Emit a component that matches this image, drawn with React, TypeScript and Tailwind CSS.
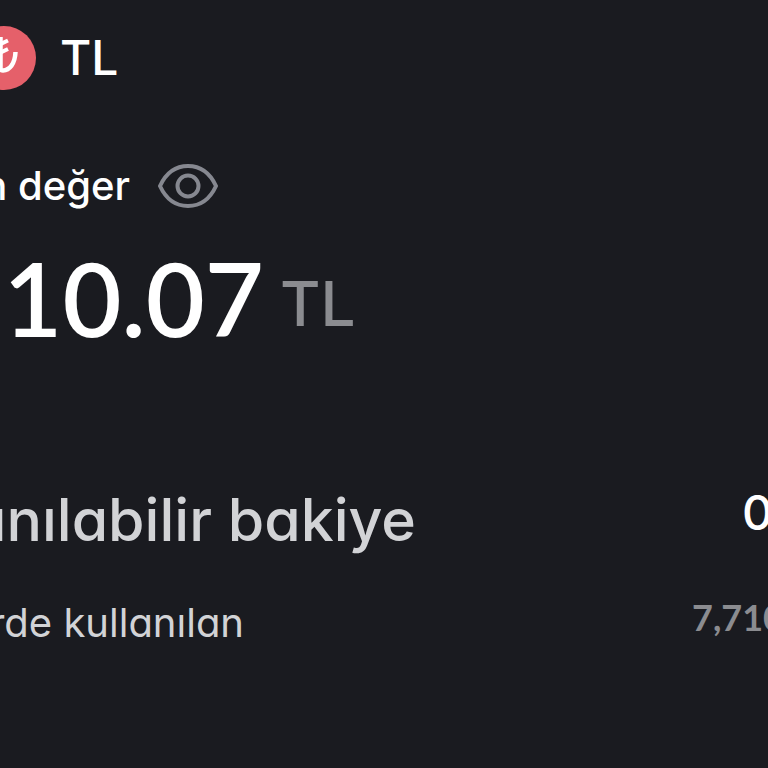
function LiraIcon() {
  return (
    <svg
      viewBox="0 0 64 64"
      className="size-16 shrink-0"
      fill="none"
      stroke="white"
      strokeWidth="4.5"
      aria-hidden="true"
    >
      <circle cx="32" cy="32" r="32" fill="#e5606a" stroke="none" />
      <path d="M28.500 11v31q0 2.500 2.500 2.500c6.500-.5 12-6.500 12.500-18.500" />
      <path d="M17 23.500l19-9M17 32l19-9" strokeWidth="4" />
    </svg>
  )
}

function EyeIcon() {
  return (
    <svg
      viewBox="0 0 60 46"
      className="h-[46px] w-[60px]"
      fill="none"
      stroke="#868890"
      strokeWidth="4"
      strokeLinejoin="round"
      aria-hidden="true"
    >
      <path d="M2 23C8 10 18 3 30 3s22 7 28 20C52 36 42 43 30 43S8 36 2 23z" />
      <circle cx="30" cy="23" r="10.500" />
    </svg>
  )
}

export default function App() {
  return (
    <main className="min-h-screen overflow-hidden bg-[#1a1b20] pt-[26px] font-['Inter',sans-serif] font-medium whitespace-nowrap text-white [font-feature-settings:'cv11']">
      <div className="-ml-7">
        <header className="flex items-center gap-6">
          <LiraIcon />
          <h1 className="text-[48px] leading-[64px]">TL</h1>
        </header>

        <section className="mt-[72px]">
          <div className="flex items-center gap-7">
            <h2 className="flex w-[158px] justify-end text-[40px] leading-[48px]">n değer</h2>
            <button type="button" aria-label="Bakiyeyi gizle">
              <EyeIcon />
            </button>
          </div>
          <p className="mt-10 flex items-start gap-4">
            <span className="flex w-[292px] justify-end font-['Lato',sans-serif] text-[102px] leading-[96px] font-semibold">10.07</span>
            <span className="text-[62px] leading-[108px] text-[#8b8c90]">TL</span>
          </p>
        </section>

        <dl className="mt-[129px]">
          <div className="flex items-start justify-between">
            <dt className="flex w-[444px] justify-end text-[59px] leading-[66px] text-[#d2d3d6]">anılabilir bakiye</dt>
            <dd className="w-[26px] text-[48px] leading-[52px]">0</dd>
          </div>
          <div className="mt-11 flex items-start justify-between">
            <dt className="flex w-[272px] justify-end text-[40px] leading-[52px] font-normal text-[#d2d3d6]">rde kullanılan</dt>
            <dd className="w-[76px] font-['Lato',sans-serif] text-[36px] leading-[40px] font-bold text-[#8b8c90]">7,710</dd>
          </div>
        </dl>
      </div>
    </main>
  )
}
